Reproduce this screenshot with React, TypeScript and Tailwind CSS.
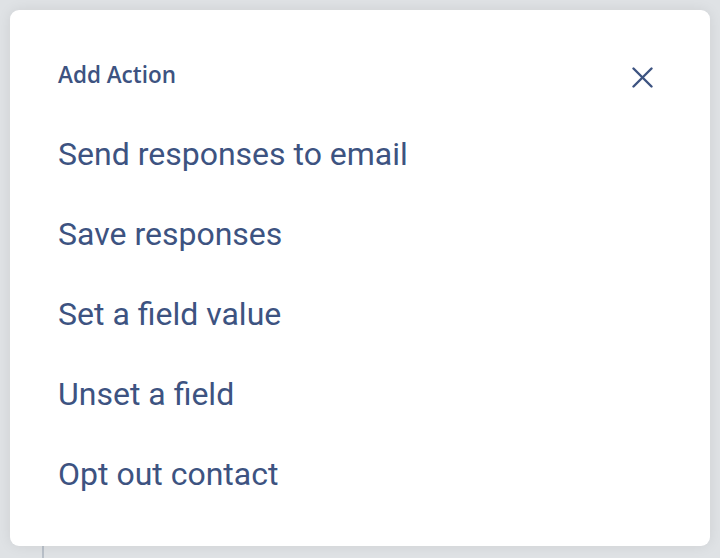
const actions = [
  "Send responses to email",
  "Save responses",
  "Set a field value",
  "Unset a field",
  "Opt out contact",
];

export default function App() {
  return (
    <div className="relative h-[558px] w-[720px] overflow-hidden bg-[#dfe2e5] p-[10px] pb-0">
      {/* page behind the overlay */}
      <div className="absolute left-[42px] top-[540px] h-[20px] w-[2px] bg-[#b9c0c9]" />

      {/* Modal */}
      <div className="relative h-[536px] rounded-[9px] bg-white pl-[48px] pr-[57px] pt-[49px] shadow-[0_0_14px_rgba(0,0,0,0.08)]">
        <div className="flex items-start justify-between">
          <h2 className="font-['Open_Sans',sans-serif] text-[22.5px] font-semibold leading-[32px] text-[#3d5381]">
            Add Action
          </h2>
          <button className="mt-[8px] text-[#3d5381]">
            <svg width="21" height="21" viewBox="0 0 21 21" fill="none" stroke="currentColor" strokeWidth="2.4" strokeLinecap="round">
              <line x1="1.5" y1="1.5" x2="19.5" y2="19.5" />
              <line x1="19.5" y1="1.5" x2="1.5" y2="19.5" />
            </svg>
          </button>
        </div>

        <ul className="mt-[23px]">
          {actions.map((a) => (
            <li
              key={a}
              className="font-['Roboto',sans-serif] text-[32px] leading-[80px] text-[#3d5381]"
            >
              {a}
            </li>
          ))}
        </ul>
      </div>
    </div>
  );
}
